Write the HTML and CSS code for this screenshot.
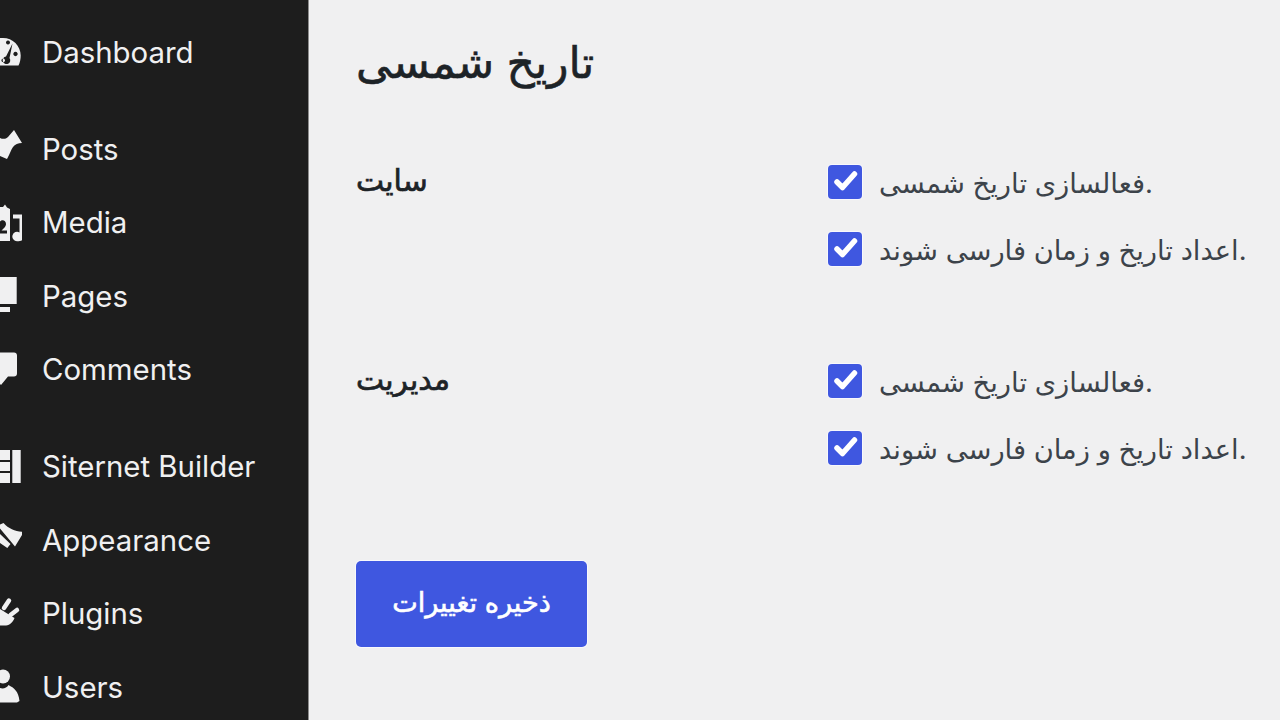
FILE: index.html
```html
<!DOCTYPE html>
<html lang="en">
<head>
<meta charset="utf-8">
<title>تاریخ شمسی</title>
<link rel="stylesheet" href="styles.css">
</head>
<body>
<div class="app">
  <nav class="sidebar">
    <a class="item group-end"><svg class="icon" viewBox="0 0 22 44"><path fill-rule="evenodd" d="M3 7C12.600 7 20.700 14.800 20.700 24.500C20.700 28 20 31.500 18.500 34.600H0V7ZM15.500 20.800a2.200 2.200 0 1 0 .01 0ZM8 9.500a2 2 0 1 0 .01 0ZM12.500 12.500L6 25.500a3.800 3.800 0 1 0 3.500 1.500ZM3.200 27.500a1.800 1.800 0 1 1-.01 0Z" fill="#f0f0f1"/></svg><span>Dashboard</span></a>
    <a class="item"><svg class="icon" viewBox="0 0 22 44"><path d="M0 11C3 12.500 6 12 8 10L14 3L22 16C18 16 15 17.500 13 20C11 22.500 10 27 7 32L0 29Z" fill="#f0f0f1"/></svg><span>Posts</span></a>
    <a class="item"><svg class="icon" viewBox="0 0 22 44"><path fill-rule="evenodd" d="M0 6H3L5 3.500L7 6.500L10 8V40H0ZM0 20.500C2 18 6 19 6 23C6 26 3 28 1.500 29.500H7V32.500H0Z" fill="#f0f0f1"/><path d="M13 13.500H23.500V37C23.500 39 21 40.200 17 40.200A4.700 4.700 0 1 1 19.500 31.500V17.500H13Z" fill="#f0f0f1"/></svg><span>Media</span></a>
    <a class="item"><svg class="icon" viewBox="0 0 22 44"><path d="M0 3H16.700V30H0ZM0 33H10V38H0Z" fill="#f0f0f1"/></svg><span>Pages</span></a>
    <a class="item group-end"><svg class="icon" viewBox="0 0 22 44"><path d="M0 4.500H14C15.800 4.500 17 5.700 17 7.500V25.500C17 27.300 15.800 28.500 14 28.500H8L1 37L0 36Z" fill="#f0f0f1"/></svg><span>Comments</span></a>
    <a class="item"><svg class="icon" viewBox="0 0 22 44"><path d="M0 5H10V15H0ZM0 17H10V26H0ZM0 28H10V38H0ZM12.300 5H20.700V38H12.300Z" fill="#f0f0f1"/></svg><span>Siternet Builder</span></a>
    <a class="item"><svg class="icon" viewBox="0 0 22 44"><path d="M0 6.500L3.500 5C9 11 16 14 24 13.700L15 28.500L0 10.500ZM0 16L10.500 26L7.300 30L0 25Z" fill="#f0f0f1"/></svg><span>Appearance</span></a>
    <a class="item"><svg class="icon" viewBox="0 0 22 44"><path d="M0 17L14.500 26C13 30 10 33 6 33.500H0Z" fill="#f0f0f1"/><path d="M4 16L9 8.500M10.500 23L17 18" class="prong"/></svg><span>Plugins</span></a>
    <a class="item"><svg class="icon" viewBox="0 0 22 44"><circle cx="3" cy="11.500" r="7" fill="#f0f0f1"/><path d="M0 23C3 24 7 23 8.500 20C14 23 18.500 26 19.500 36L17 37.500H0Z" fill="#f0f0f1"/></svg><span>Users</span></a>
  </nav>
  <main class="content">
    <h1 class="title">تاریخ شمسی</h1>
    <section class="row">
      <h2 class="label">سایت</h2>
      <div class="options">
        <label class="option"><span class="box"><svg viewBox="0 0 34 34"><path d="M9 17L14.500 22.500L26.500 9" class="tick"/></svg></span><span class="text">فعالسازی تاریخ شمسی.</span></label>
        <label class="option"><span class="box"><svg viewBox="0 0 34 34"><path d="M9 17L14.500 22.500L26.500 9" class="tick"/></svg></span><span class="text">اعداد تاریخ و زمان فارسی شوند.</span></label>
      </div>
    </section>
    <section class="row">
      <h2 class="label">مدیریت</h2>
      <div class="options">
        <label class="option"><span class="box"><svg viewBox="0 0 34 34"><path d="M9 17L14.500 22.500L26.500 9" class="tick"/></svg></span><span class="text">فعالسازی تاریخ شمسی.</span></label>
        <label class="option"><span class="box"><svg viewBox="0 0 34 34"><path d="M9 17L14.500 22.500L26.500 9" class="tick"/></svg></span><span class="text">اعداد تاریخ و زمان فارسی شوند.</span></label>
      </div>
    </section>
    <button class="save" type="button">ذخیره تغییرات</button>
  </main>
</div>
</body>
</html>
```
FILE: styles.css
```css
* { box-sizing: border-box; }
html, body { margin: 0; height: 100%; overflow: hidden; }
body { background: #f0f0f1; font-family: "Inter", "DejaVu Sans", sans-serif; }
.app { display: flex; height: 720px; }
.sidebar {
  width: 309px; flex: none; background: #1d1d1d; border-right: 1px solid #8c8c8c;
  padding-top: 16px; display: flex; flex-direction: column; overflow: hidden;
}
.item { display: flex; align-items: center; gap: 21px; height: 73.500px; flex: none; color: #f0f0f1; font-size: 29.400px; }
.item span { margin-left: -1px; }
.group-end { margin-bottom: 23.200px; }
.icon { width: 22px; height: 44px; flex: none; }
.prong { fill: none; stroke: #f0f0f1; stroke-width: 4.500px; stroke-linecap: round; }
.content { flex: 1; padding: 32px 0 0 47px; }
.title { margin: 0; font-size: 44px; line-height: 60px; font-weight: 400; color: #1d2327; -webkit-text-stroke: 0.6px #1d2327; }
.row { display: grid; grid-template-columns: 472px 1fr; margin-top: 73px; height: 126px; }
.row + .row { margin-top: 73px; }
.label { margin: -2px 0 0; font-size: 29.800px; line-height: 34px; font-weight: 400; color: #1d2327; -webkit-text-stroke: 0.7px #1d2327; }
.options { display: flex; flex-direction: column; gap: 33px; }
.option { display: flex; align-items: center; gap: 17px; height: 34px; font-size: 27.350px; color: #3c434a; }
.text { padding-top: 2px; }
.box { width: 34px; height: 34px; flex: none; border-radius: 4px; background: #3f57e0; display: block; box-shadow: 0 0 0 1px #f8f8fc; }
.box svg { display: block; width: 34px; height: 34px; }
.tick { fill: none; stroke: #fff; stroke-width: 5.500px; stroke-linecap: round; stroke-linejoin: round; }
.save {
  display: block; margin-top: 71px; padding: 0 0 4px; width: 231px; height: 86px; border: 0; border-radius: 5px;
  background: #3f57e0; color: #fff; font: 400 27.100px "Inter", "DejaVu Sans", sans-serif; -webkit-text-stroke: 0.6px #fff;
  box-shadow: 0 0 0 1px #f8f8fc;
}
```
